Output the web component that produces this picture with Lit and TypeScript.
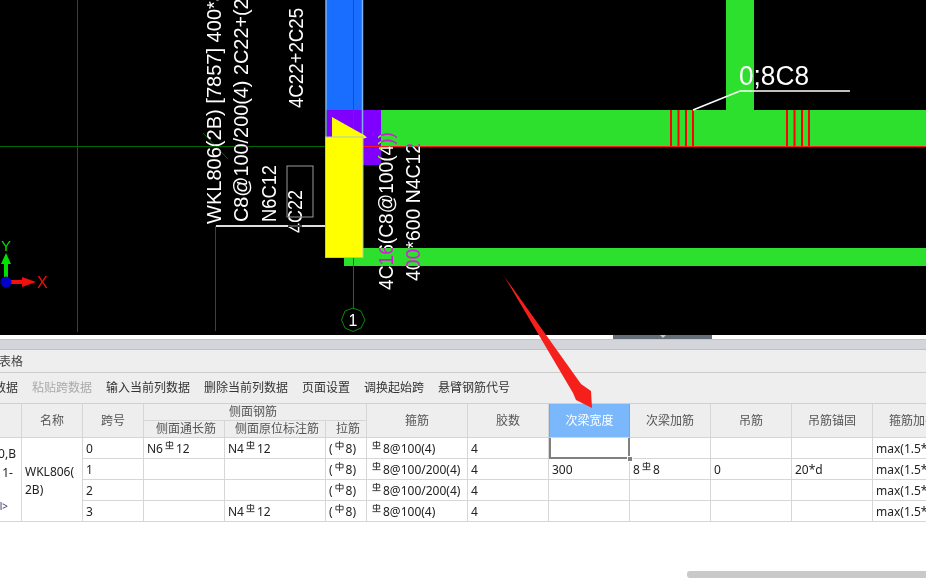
import { LitElement, html, svg, css } from 'lit';
import { customElement } from 'lit/decorators.js';

// rebar grade symbols from the CAD font, no unicode equivalent
const bar = html`<svg class="sym" viewBox="0 0 10 10"><path d="M1.5 1.5h7v4h-7zM5 0v8.5M.5 8.5h9" /></svg>`;
const plain = html`<svg class="sym" viewBox="0 0 10 10"><path d="M1 2.5h8v4H1zM5 0v10" /></svg>`;

const rows = [
  { span: '0', a: html`N6${bar}12`, b: html`N4${bar}12`, hoop: '8@100(4)', w: '', add: '', hang: '', anchor: '' },
  { span: '1', a: '', b: '', hoop: '8@100/200(4)', w: '300', add: html`8${bar}8`, hang: '0', anchor: '20*d' },
  { span: '2', a: '', b: '', hoop: '8@100/200(4)', w: '', add: '', hang: '', anchor: '' },
  { span: '3', a: '', b: html`N4${bar}12`, hoop: '8@100(4)', w: '', add: '', hang: '', anchor: '' },
];

const labels: [string, number, number, number][] = [
  ['WKL806(2B) [7857] 400*8', 221, 224, 234],
  ['C8@100/200(4) 2C22+(2C', 248, 222, 238],
  ['N6C12', 276, 222, 57],
  ['4C22+2C25', 303, 108, 100],
  ['4C22', 302, 233, 43],
  ['4C16(C8@100(4))', 393, 290, 158],
  ['400*600 N4C12', 420, 281, 138],
];

@customElement('app-root')
export class AppRoot extends LitElement {
  static styles = css`
    :host {
      display: block;
      position: relative;
      width: 926px;
      height: 578px;
      overflow: hidden;
      background: #fff;
      font-family: 'Noto Sans', 'Noto Sans CJK SC', sans-serif;
      font-size: 12px;
      color: #222;
    }
    .canvas {
      display: block;
    }
    .cad {
      font-family: 'Liberation Sans', sans-serif;
      fill: #fff;
      mix-blend-mode: difference;
    }
    .note {
      font-family: 'Liberation Sans', sans-serif;
      fill: #fff;
    }
    .strip {
      height: 4px;
      display: flex;
      padding-left: 613px;
    }
    .grip {
      width: 99px;
      background: #666e78;
      display: flex;
      justify-content: center;
    }
    .grip i {
      width: 0;
      height: 0;
      border: 3px solid transparent;
      border-top-color: #c5c8cc;
      border-bottom: 0;
    }
    .band {
      height: 11px;
      box-sizing: border-box;
      background: #d3d5da;
      border-top: 1px solid #c4c6cb;
      border-bottom: 1px solid #bfc1c5;
    }
    .title {
      height: 23px;
      box-sizing: border-box;
      background: #eee;
      border-bottom: 1px solid #ccc;
      line-height: 23px;
      margin-left: -1px;
      color: #444;
    }
    .tools {
      height: 30px;
      background: #eee;
      display: flex;
      gap: 14px;
      margin-left: -42px;
      line-height: 29px;
      color: #333;
      white-space: nowrap;
    }
    .tools .off {
      color: #aaa;
    }
    .wrap {
      overflow: hidden;
      height: 119px;
      border-top: 1px solid #d0d0d0;
    }
    table {
      table-layout: fixed;
      border-collapse: separate;
      border-spacing: 0;
      width: 1032px;
      margin-left: -78px;
    }
    td,
    th {
      box-sizing: border-box;
      border-right: 1px solid #d6d6d6;
      border-bottom: 1px solid #d6d6d6;
      padding: 0 0 0 3px;
      white-space: nowrap;
      overflow: hidden;
      font-weight: 400;
    }
    th {
      background: #eee;
      color: #555;
      height: 17px;
      padding: 0;
      text-align: center;
      line-height: 16px;
    }
    th.group {
      padding-right: 4px;
    }
    th.sub {
      padding-left: 4px;
    }
    td {
      height: 21px;
      padding-top: 2px;
      line-height: 18px;
    }
    th.active {
      background: #7ab8fb;
      color: #fff;
      border-left: 1px solid #6aa9f0;
      border-right: 1px solid #6aa9f0;
    }
    td.floor {
      vertical-align: top;
      text-align: right;
      padding: 6px 5px 0 0;
      line-height: 19px;
    }
    td.floor small {
      display: block;
      margin-top: -4px;
      padding-right: 8px;
      font-size: 10px;
      color: #336;
    }
    td.name {
      line-height: 18px;
    }
    td.sel {
      position: relative;
      overflow: visible;
    }
    .focus {
      position: absolute;
      inset: 0 -1px -1px 0;
      border: 2px solid #808080;
      border-top: 0;
    }
    .handle {
      position: absolute;
      right: -3px;
      bottom: -3px;
      width: 4px;
      height: 4px;
      background: #808080;
      border: 1px solid #fff;
      box-sizing: content-box;
      margin: -1px;
    }
    .sym {
      width: 9px;
      height: 9px;
      margin: 0 2px 1px 2px;
      vertical-align: 2px;
      fill: none;
      stroke: #333;
      stroke-width: 1;
    }
    .scroll {
      position: absolute;
      left: 687px;
      right: 0;
      bottom: 0;
      height: 7px;
      background: #c9c9c9;
      border-radius: 3px 0 0 3px;
    }
    .arrow {
      position: absolute;
      left: 0;
      top: 0;
      pointer-events: none;
    }
  `;

  private drawing() {
    return svg`
      <rect width="926" height="335" fill="#000" />
      <g stroke="#006a00" fill="none">
        <path d="M0 146.500H326M77.500 0V332M215.500 226V331M203 133L228 159" />
      </g>
      <rect x="726" y="0" width="28" height="110" fill="#2de02d" />
      <rect x="381" y="110" width="545" height="36" fill="#2de02d" />
      <rect x="344" y="248" width="582" height="18" fill="#2de02d" />
      <rect x="327" y="110" width="54" height="27" fill="#8000ff" />
      <rect x="363" y="137" width="18" height="28" fill="#8000ff" />
      <rect x="326" y="0" width="37" height="110" fill="#1a6eff" />
      <path d="M326 0V137M362.500 0V137" stroke="#7fb0ea" stroke-width="1.500" fill="none" />
      <path d="M353.500 0V137M353.500 258V309" stroke="#d0101a" fill="none" />
      <path d="M363 146.500H926" stroke="#ff1a1a" fill="none" />
      <path d="M671 110v36M678.500 110v36M686 110v36M693 110v36M787 110v36M794.500 110v36M802 110v36M809 110v36" stroke="#f00" stroke-width="2" fill="none" />
      <path d="M332 117L364 135L367 137.500L362 139L332 137Z" fill="#ff0" />
      <rect x="325.500" y="137" width="37.500" height="120.500" fill="#ff0" stroke="#a9c6c9" />
      <rect x="287" y="166" width="26" height="51" fill="none" stroke="#9a9a9a" />
      <path d="M216 226H325" stroke="#ddd" stroke-width="2" fill="none" />
      <path d="M693 110L740 91H850" stroke="#fff" stroke-width="1.500" fill="none" />
      <polygon points="353,308 361,311 365,320 361,328 353,331.500 345,328 341.500,320 345,311" fill="none" stroke="#0a8a0a" />
      <text class="note" x="353" y="326" font-size="16" text-anchor="middle">1</text>
      ${labels.map(
        ([t, x, y, len]) => svg`<text class="cad" font-size="21" transform="translate(${x} ${y}) rotate(-90)" textLength=${len} lengthAdjust="spacingAndGlyphs">${t}</text>`,
      )}
      <text class="note" x="739" y="85" font-size="27" textLength="70" lengthAdjust="spacingAndGlyphs">0;8C8</text>
      <path d="M4 263h4v16H4z" fill="#00e000" />
      <path d="M6 253L11 264H1Z" fill="#00e000" />
      <text x="1" y="251" font-size="15" fill="#00e000" font-family="Liberation Sans">Y</text>
      <path d="M10 280h13v4H10z" fill="#f01010" />
      <path d="M36 282L22 277V287Z" fill="#f01010" />
      <text x="37" y="288" font-size="16" fill="#f01010" font-family="Liberation Sans">X</text>
      <circle cx="6" cy="282" r="5.500" fill="#0000c8" />
    `;
  }

  render() {
    return html`
      <svg class="canvas" width="926" height="335">${this.drawing()}</svg>
      <div class="strip"><div class="grip"><i></i></div></div>
      <div class="band"></div>
      <div class="title">表格</div>
      <div class="tools">
        <span>复制跨数据</span>
        <span class="off">粘贴跨数据</span>
        <span>输入当前列数据</span>
        <span>删除当前列数据</span>
        <span>页面设置</span>
        <span>调换起始跨</span>
        <span>悬臂钢筋代号</span>
      </div>
      <div class="wrap">
        <table>
          <colgroup>
            <col style="width:100px" /><col style="width:61px" /><col style="width:61px" /><col style="width:81px" />
            <col style="width:101px" /><col style="width:41px" /><col style="width:101px" /><col style="width:81px" />
            <col style="width:81px" /><col style="width:81px" /><col style="width:81px" /><col style="width:81px" /><col style="width:81px" />
          </colgroup>
          <thead>
            <tr>
              <th rowspan="2">位置</th>
              <th rowspan="2">名称</th>
              <th rowspan="2">跨号</th>
              <th class="group" colspan="3">侧面钢筋</th>
              <th rowspan="2">箍筋</th>
              <th rowspan="2">胶数</th>
              <th rowspan="2" class="active">次梁宽度</th>
              <th rowspan="2">次梁加筋</th>
              <th rowspan="2">吊筋</th>
              <th rowspan="2">吊筋锚固</th>
              <th rowspan="2">箍筋加密</th>
            </tr>
            <tr>
              <th class="sub">侧面通长筋</th>
              <th class="sub">侧面原位标注筋</th>
              <th class="sub">拉筋</th>
            </tr>
          </thead>
          <tbody>
            ${rows.map(
              (r, i) => html`<tr>
                ${i === 0
                  ? html`<td class="floor" rowspan="4">0,B<br />1-&nbsp;<br /><br /><small>l&gt;</small></td>
                      <td class="name" rowspan="4">WKL806(<br />2B)</td>`
                  : ''}
                <td>${r.span}</td>
                <td>${r.a}</td>
                <td>${r.b}</td>
                <td>(${plain}8)</td>
                <td>${bar}${r.hoop}</td>
                <td>4</td>
                <td class=${i === 0 ? 'sel' : ''}>
                  ${i === 0 ? html`<div class="focus"></div><div class="handle"></div>` : r.w}
                </td>
                <td>${r.add}</td>
                <td>${r.hang}</td>
                <td>${r.anchor}</td>
                <td>max(1.5*h,500)</td>
              </tr>`,
            )}
          </tbody>
        </table>
      </div>
      <div class="scroll"></div>
      <svg class="arrow" width="926" height="578">
        <polygon points="504,276 581,384 591,391 592,408 576,400 573,393" fill="#f5201c" />
      </svg>
    `;
  }
}
